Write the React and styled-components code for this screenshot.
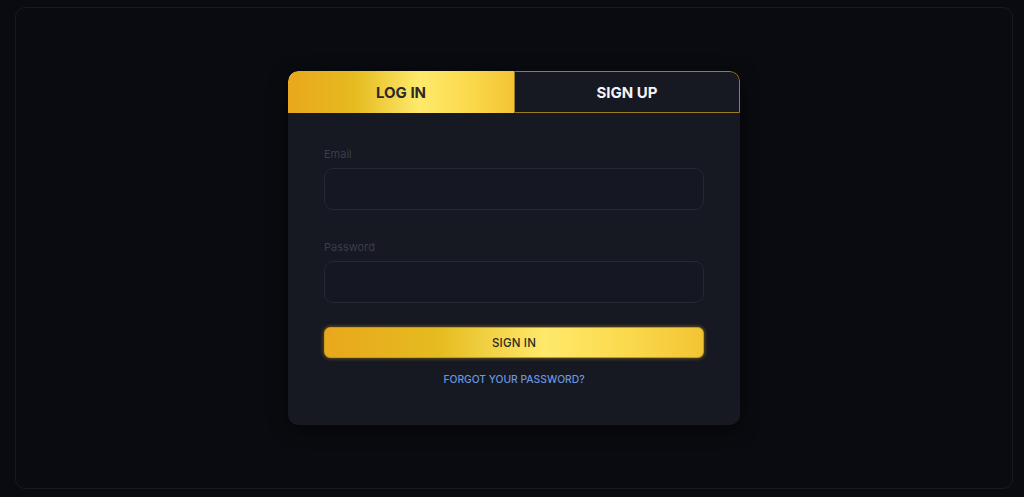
import React, { useState } from 'react'
import styled, { createGlobalStyle } from 'styled-components'

const GlobalStyle = createGlobalStyle`
  html, body {
    margin: 0;
    padding: 0;
    background: #0a0b10;
  }
  body {
    font-family: 'Inter', 'Noto Sans', sans-serif;
  }
  * { box-sizing: border-box; }
`

const gold = 'linear-gradient(90deg, #e9a81d 0%, #e5bb20 30%, #ffe96b 58%, #fbd94d 80%, #f2c434 100%)'

const Page = styled.main`
  width: 1024px;
  height: 497px;
  padding: 7px 11px 8px 15px;
`

const Frame = styled.section`
  height: 100%;
  border: 1px solid #181a22;
  border-radius: 10px;
  display: flex;
  align-items: center;
  justify-content: center;
`

const Card = styled.div`
  width: 452px;
  background: #161822;
  border-radius: 10px;
  box-shadow: 0 4px 18px rgba(0, 0, 0, 0.55);
  overflow: hidden;
`

const Tabs = styled.div`
  display: grid;
  grid-template-columns: 226px 1fr;
  height: 42px;
`

const Tab = styled.button`
  border: 0;
  margin: 0;
  cursor: pointer;
  font-family: inherit;
  font-size: 15px;
  font-weight: 700;
  color: ${p => (p.$active ? '#2b2a26' : '#f4f4f6')};
  background: ${p => (p.$active ? gold : '#161822')};
  border-radius: ${p => (p.$active ? '10px 0 0 0' : '0 10px 0 0')};
  ${p => !p.$active && `
    border: 1px solid #9c7e22;
  `}
`

const Body = styled.form`
  padding: 34px 36px 39px;
  display: flex;
  flex-direction: column;
`

const Field = styled.div`
  display: flex;
  flex-direction: column;
  margin-bottom: ${p => p.$last ? '24px' : '30px'};
`

const Label = styled.label`
  font-size: 11px;
  line-height: 14px;
  color: #3a3d4d;
  margin-bottom: 7px;
`

const Input = styled.input`
  height: 42px;
  background: #151722;
  border: 1px solid #262835;
  border-radius: 9px;
  padding: 0 14px;
  color: #e0e0e8;
  font-family: inherit;
  font-size: 13px;
  outline: none;
`

const SubmitButton = styled.button`
  height: 31px;
  border: 1px solid #c89a1c;
  border-radius: 6px;
  background: ${gold};
  box-shadow: 0 0 4px rgba(214, 168, 30, 0.55);
  font-family: inherit;
  font-size: 11.5px;
  font-weight: 500;
  color: #2e2b22;
  letter-spacing: 0.2px;
  cursor: pointer;
`

const Forgot = styled.a`
  margin-top: 14px;
  text-align: center;
  font-size: 10.3px;
  line-height: 14px;
  font-weight: 500;
  color: #6b96df;
  text-decoration: none;
  cursor: pointer;
`

export default function App() {
  const [tab, setTab] = useState('login')
  const [email, setEmail] = useState('')
  const [password, setPassword] = useState('')

  return <Page>
    <GlobalStyle />
    <Frame>
      <Card>
        <Tabs>
          <Tab $active={tab === 'login'} onClick={() => setTab('login')}>LOG IN</Tab>
          <Tab $active={tab === 'signup'} onClick={() => setTab('signup')}>SIGN UP</Tab>
        </Tabs>
        <Body onSubmit={e => e.preventDefault()}>
          <Field>
            <Label>Email</Label>
            <Input value={email} onChange={e => setEmail(e.target.value)} />
          </Field>
          <Field $last>
            <Label>Password</Label>
            <Input type='password' value={password} onChange={e => setPassword(e.target.value)} />
          </Field>
          <SubmitButton type='submit'>SIGN IN</SubmitButton>
          <Forgot>FORGOT YOUR PASSWORD?</Forgot>
        </Body>
      </Card>
    </Frame>
  </Page>
}
